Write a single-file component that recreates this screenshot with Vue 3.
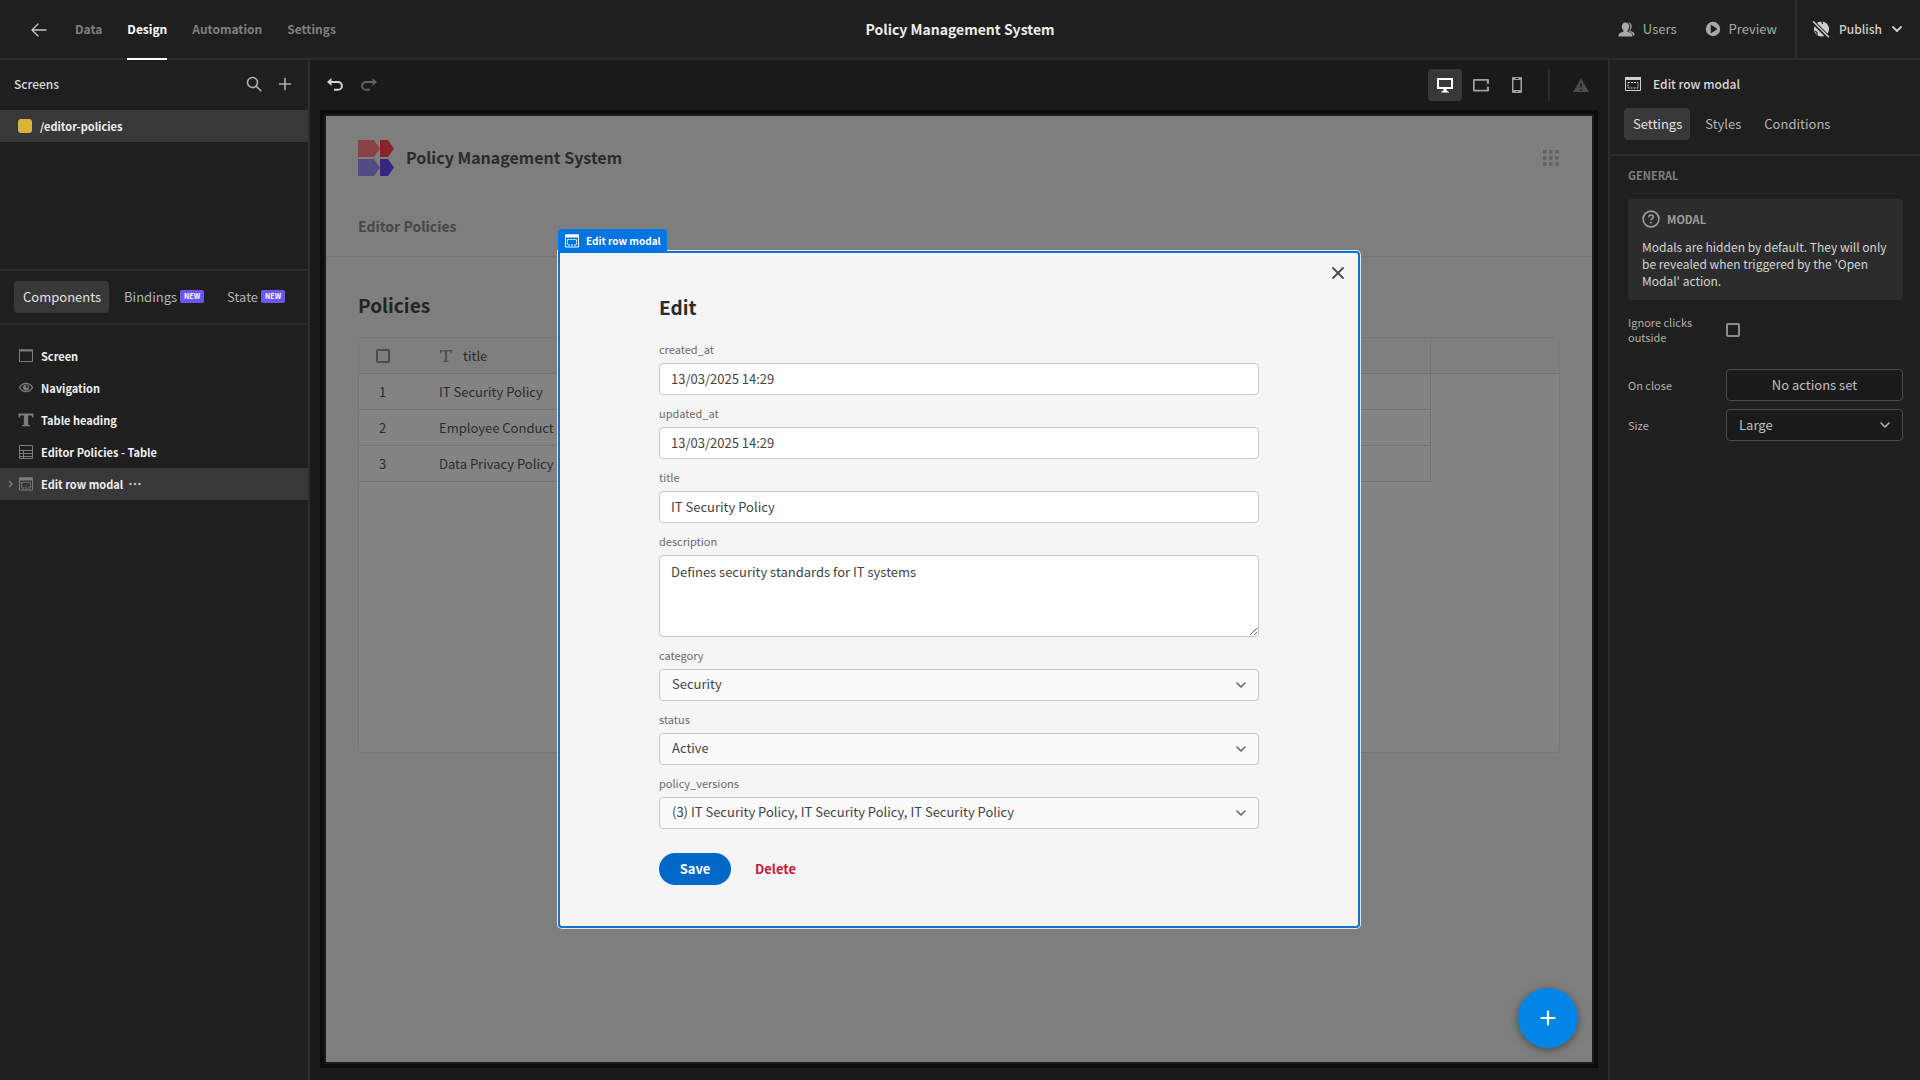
<script setup>
import { ref } from 'vue'

const navTabs = ['Data', 'Design', 'Automation', 'Settings']
const activeNav = ref('Design')
const treeTabs = [
  { name: 'Components', isNew: false },
  { name: 'Bindings', isNew: true },
  { name: 'State', isNew: true },
]
const activeTree = ref('Components')
const components = [
  { name: 'Screen', icon: 'screen' },
  { name: 'Navigation', icon: 'eye' },
  { name: 'Table heading', icon: 'text' },
  { name: 'Editor Policies - Table', icon: 'table' },
  { name: 'Edit row modal', icon: 'modal' },
]
const selected = ref('Edit row modal')
const panelTabs = ['Settings', 'Styles', 'Conditions']
const activePanel = ref('Settings')
const rows = ['IT Security Policy', 'Employee Conduct Policy', 'Data Privacy Policy']
const textFields = ref([
  { name: 'created_at', value: '13/03/2025 14:29' },
  { name: 'updated_at', value: '13/03/2025 14:29' },
  { name: 'title', value: 'IT Security Policy' },
])
const description = ref('Defines security standards for IT systems')
const selectFields = [
  { name: 'category', value: 'Security' },
  { name: 'status', value: 'Active' },
  { name: 'policy_versions', value: '(3) IT Security Policy, IT Security Policy, IT Security Policy' },
]
</script>

<template>
  <div class="builder">
    <header class="topbar">
      <nav class="nav">
        <button class="icon-btn back" aria-label="Back">
          <svg width="16" height="16" viewBox="0 0 16 16" fill="none" stroke="currentColor" stroke-width="1.4" stroke-linecap="round" stroke-linejoin="round"><path d="M15 8H1M7 2L1 8l6 6" /></svg>
        </button>
        <a v-for="t in navTabs" :key="t" href="#" class="nav-link" :class="{ active: t === activeNav }" @click.prevent="activeNav = t">{{ t }}</a>
      </nav>
      <h1 class="app-name">Policy Management System</h1>
      <div class="top-actions">
        <button class="top-btn">
          <svg width="17" height="17" viewBox="0 0 17 17" fill="currentColor"><path d="M7.500 1.500c2.500 0 3.700 1.800 3.700 4 0 1.700-.7 3.200-1.600 4.100v1.200c2.500.5 4.900 1.600 4.900 4v.700H.5v-.7c0-2.400 2.400-3.500 4.900-4V9.600C4.500 8.700 3.800 7.200 3.800 5.500c0-2.200 1.200-4 3.700-4z" /><path d="M10.300 1.500c2 0 3.300 1.700 3.300 3.800 0 1.500-.5 2.900-1.300 3.700v1.100c2.200.5 4.200 1.500 4.200 3.400v1h-1.300c-.3-2.200-2-3.400-4.300-4.100.8-1.200 1.300-3 1.300-4.900 0-1.700-.8-3-1.900-4z" /></svg>
          <span>Users</span>
        </button>
        <button class="top-btn">
          <svg width="16" height="16" viewBox="0 0 16 16" fill="currentColor" fill-rule="evenodd"><path d="M8 .8a7.200 7.200 0 1 0 0 14.400A7.200 7.200 0 0 0 8 .8zM5.800 4.200c0-.3.300-.5.600-.3l5.400 3.700c.3.200.3.600 0 .8l-5.400 3.700c-.3.200-.6 0-.6-.3z" /></svg>
          <span>Preview</span>
        </button>
        <button class="top-btn publish">
          <svg width="18" height="18" viewBox="0 0 18 18"><circle cx="9.500" cy="9" r="7.600" fill="currentColor" /><path d="M9.500 1l1.200 3M3 11l2 1.500v3" fill="none" stroke="#1f1f1f" stroke-width="1.200" /><path d="M0 .8l17.500 17.500" stroke="#1f1f1f" stroke-width="4" /><path d="M1.500 1.800L16.500 16.800" stroke="currentColor" stroke-width="1.500" stroke-linecap="round" /></svg>
          <span>Publish</span>
          <svg width="12" height="8" viewBox="0 0 12 8" fill="none" stroke="currentColor" stroke-width="1.800" stroke-linecap="round" stroke-linejoin="round"><path d="M2 2l4 4 4-4" /></svg>
        </button>
      </div>
    </header>

    <div class="body">
      <aside class="left">
        <section class="screens">
          <div class="screens-head">
            <h2 class="panel-title">Screens</h2>
            <button class="icon-btn muted" aria-label="Search screens">
              <svg width="16" height="16" viewBox="0 0 16 16" fill="none" stroke="currentColor" stroke-width="1.600" stroke-linecap="round"><circle cx="6.500" cy="6.500" r="5" /><path d="M10.300 10.300l4.500 4.500" /></svg>
            </button>
            <button class="icon-btn muted" aria-label="Add screen">
              <svg width="14" height="14" viewBox="0 0 14 14" fill="none" stroke="currentColor" stroke-width="1.600" stroke-linecap="round"><path d="M7 1.500v11M1.500 7h11" /></svg>
            </button>
          </div>
          <a href="#" class="screen-row" @click.prevent><span class="swatch"></span>/editor-policies</a>
        </section>

        <div class="tabs tree-tabs">
          <button v-for="t in treeTabs" :key="t.name" class="tab" :class="{ active: t.name === activeTree }" @click="activeTree = t.name">
            {{ t.name }}<span v-if="t.isNew" class="badge">NEW</span>
          </button>
        </div>

        <ul class="tree">
          <li v-for="c in components" :key="c.name" class="node" :class="{ selected: c.name === selected }" @click="selected = c.name">
            <span class="caret">
              <svg v-if="c.icon === 'modal'" width="5" height="8" viewBox="0 0 5 8" fill="none" stroke="currentColor" stroke-width="1.100"><path d="M1 1l3 3-3 3" /></svg>
            </span>
            <svg class="node-icon" width="16" height="16" viewBox="0 0 16 16" fill="none" stroke="currentColor" stroke-width="1">
              <template v-if="c.icon === 'screen'"><rect x="1.500" y="2" width="13" height="11.500" /><path d="M1 2.500h14" stroke-width="2" /></template>
              <template v-else-if="c.icon === 'eye'"><path d="M1.500 7.500C3 4.700 5.200 3.300 8 3.300s5 1.400 6.500 4.200c-1.500 2.800-3.700 4.200-6.500 4.200S3 10.300 1.500 7.500z" stroke-width="1.300" /><circle cx="8" cy="7.500" r="3" fill="currentColor" stroke="none" /><circle cx="8.800" cy="6.700" r="1.200" fill="#1f1f1f" stroke="none" /></template>
              <template v-else-if="c.icon === 'text'"><path d="M.5 1.500h15v4h-1.200l-.8-2h-3.300v9.300l1.800.5v1H4v-1l1.800-.5V3.500H2.500l-.8 2H.5z" fill="currentColor" stroke="none" /></template>
              <template v-else-if="c.icon === 'table'"><path d="M1.500 1.500h13v13h-13zM1.500 6.500h13M1.500 9.500h13M1.500 12.500h13M5.500 6.500v8" /></template>
              <template v-else><path d="M1.500 2h13v12h-13z" /><path d="M1 3h14" stroke-width="3" /><rect x="3.500" y="6.500" width="9" height="5.500" stroke-dasharray="2 1" /></template>
            </svg>
            <span>{{ c.name }}</span>
            <button v-if="c.name === selected" class="icon-btn more" aria-label="More actions">
              <svg width="12" height="4" viewBox="0 0 12 4" fill="currentColor"><circle cx="1.500" cy="2" r="1.300" /><circle cx="6" cy="2" r="1.300" /><circle cx="10.500" cy="2" r="1.300" /></svg>
            </button>
          </li>
        </ul>
      </aside>

      <main class="canvas">
        <div class="toolbar">
          <button class="icon-btn bright" aria-label="Undo">
            <svg width="18" height="16" viewBox="0 0 18 16" fill="none" stroke="currentColor" stroke-width="2"><path d="M4 5h8a3.900 3.900 0 0 1 0 7.800H8" /><path d="M5.500 1v8L1 5z" fill="currentColor" stroke="none" /></svg>
          </button>
          <button class="icon-btn dim" aria-label="Redo">
            <svg width="18" height="16" viewBox="0 0 18 16" fill="none" stroke="currentColor" stroke-width="2"><path d="M14 5H6a3.900 3.900 0 0 0 0 7.800h4" /><path d="M12.500 1v8L17 5z" fill="currentColor" stroke="none" /></svg>
          </button>
          <div class="devices">
            <button class="device active" aria-label="Desktop">
              <svg width="18" height="18" viewBox="0 0 18 18"><rect x="2" y="3" width="14" height="9" fill="none" stroke="currentColor" stroke-width="2" /><path d="M7.500 12h3v2.500l2.500 1.500v.5H5V16l2.500-1.500z" fill="currentColor" /></svg>
            </button>
            <button class="device" aria-label="Tablet">
              <svg width="18" height="18" viewBox="0 0 18 18"><path d="M2 3h14a1 1 0 0 1 1 1v10.500a1 1 0 0 1-1 1H2a1 1 0 0 1-1-1V4a1 1 0 0 1 1-1zm.7 1.700v9.100h12.100V4.700z" fill="currentColor" fill-rule="evenodd" /><path d="M16 7.800v3" stroke="#1a1a1a" stroke-width="2" /></svg>
            </button>
            <button class="device" aria-label="Mobile">
              <svg width="18" height="18" viewBox="0 0 18 18"><path d="M5 1h8a1 1 0 0 1 1 1v14a1 1 0 0 1-1 1H5a1 1 0 0 1-1-1V2a1 1 0 0 1 1-1zm.5 3v10h7V4z" fill="currentColor" fill-rule="evenodd" /><path d="M7.500 2.500h3M8.300 15.500h1.400" stroke="#1a1a1a" /></svg>
            </button>
          </div>
          <button class="icon-btn warn" aria-label="Issues">
            <svg width="18" height="16" viewBox="0 0 18 16"><path d="M9 1.500L17 15H1z" fill="currentColor" /><path d="M9 6v4.500M9 12v1.500" stroke="#1a1a1a" stroke-width="1.500" /></svg>
          </button>
        </div>

        <div class="frame">
          <div class="preview">
            <div class="site-head">
              <svg class="logo" width="36" height="36" viewBox="0 0 36 36"><path d="M0 0h16l6 8.500L16 17H0z" fill="#8b4245" /><path d="M22 0h8l6 8.500L30 17h-8z" fill="#8a2329" /><path d="M0 19h16l6 8.500L16 36H0z" fill="#544a86" /><path d="M22 19h8l6 8.500L30 36h-8z" fill="#382583" /></svg>
              <div class="site-name">Policy Management System</div>
              <svg class="grid-icon" width="16" height="16" viewBox="0 0 16 16" fill="#626262"><path d="M0 0h3.500v3.500H0zM6.200 0h3.500v3.500H6.200zM12.300 0h3.500v3.500h-3.500zM0 6.200h3.500v3.500H0zM6.200 6.200h3.500v3.500H6.200zM12.300 6.200h3.500v3.500h-3.500zM0 12.300h3.500v3.500H0zM6.200 12.300h3.500v3.500H6.200zM12.300 12.300h3.500v3.500h-3.500z" /></svg>
            </div>
            <div class="site-nav"><a href="#" @click.prevent>Editor Policies</a></div>
            <div class="site-body">
              <h2 class="section-title">Policies</h2>
              <div class="grid">
                <table class="data">
                  <colgroup><col class="c-sel" /><col /><col class="c-tail" /></colgroup>
                  <thead>
                    <tr>
                      <th class="sel"><input type="checkbox" class="check dark" aria-label="Select all rows" /></th>
                      <th>
                        <span class="th-title"><svg width="14" height="14" viewBox="0 0 14 14" fill="#525252"><path d="M1 1h12v3.200h-1l-.6-1.700H8v9l1.700.5v.9H4.300V12l1.700-.5v-9H2.600L2 4.200H1z" /></svg>title</span>
                      </th>
                      <th></th>
                    </tr>
                  </thead>
                  <tbody>
                    <tr v-for="(r, i) in rows" :key="r">
                      <td class="sel">{{ i + 1 }}</td>
                      <td>{{ r }}</td>
                      <td class="tail"></td>
                    </tr>
                  </tbody>
                </table>
              </div>
            </div>

            <div class="overlay">
              <form class="modal" role="dialog" aria-label="Edit" @submit.prevent>
                <div class="tag">
                  <svg width="16" height="16" viewBox="0 0 16 16" fill="none" stroke="currentColor"><path d="M1.500 2h13v12h-13z" /><path d="M1 3h14" stroke-width="3" /><rect x="3.500" y="6.500" width="9" height="5.500" stroke-dasharray="2 1" /></svg>
                  Edit row modal
                </div>
                <button type="button" class="icon-btn close" aria-label="Close">
                  <svg width="14" height="14" viewBox="0 0 14 14" fill="none" stroke="currentColor" stroke-width="1.800" stroke-linecap="round"><path d="M2 2l10 10M12 2L2 12" /></svg>
                </button>
                <h2 class="modal-title">Edit</h2>
                <div v-for="f in textFields" :key="f.name" class="field">
                  <label :for="f.name">{{ f.name }}</label>
                  <input :id="f.name" v-model="f.value" type="text" class="control" />
                </div>
                <div class="field">
                  <label for="description">description</label>
                  <textarea id="description" v-model="description" class="control area"></textarea>
                </div>
                <div v-for="f in selectFields" :key="f.name" class="field">
                  <label :for="f.name">{{ f.name }}</label>
                  <div class="select-wrap">
                    <select :id="f.name" class="control picker"><option>{{ f.value }}</option></select>
                    <svg class="chevron" width="12" height="8" viewBox="0 0 12 8" fill="none" stroke="currentColor" stroke-width="1.600" stroke-linecap="round" stroke-linejoin="round"><path d="M2 2l4 4 4-4" /></svg>
                  </div>
                </div>
                <div class="buttons">
                  <button type="submit" class="save">Save</button>
                  <button type="button" class="delete">Delete</button>
                </div>
              </form>
            </div>

            <button class="fab" aria-label="Add component">
              <svg width="16" height="16" viewBox="0 0 16 16" stroke="#fff" stroke-width="2.200" stroke-linecap="round"><path d="M8 1.500v13M1.500 8h13" /></svg>
            </button>
          </div>
        </div>
      </main>

      <aside class="right">
        <div class="right-head">
          <svg width="16" height="16" viewBox="0 0 16 16" fill="none" stroke="currentColor"><path d="M.5 1.500h15v13H.5z" /><path d="M0 2.500h16" stroke-width="3" /><rect x="3" y="6.500" width="10" height="5.500" stroke-dasharray="2 1" /></svg>
          <h2 class="panel-title">Edit row modal</h2>
        </div>
        <div class="tabs panel-tabs">
          <button v-for="t in panelTabs" :key="t" class="tab" :class="{ active: t === activePanel }" @click="activePanel = t">{{ t }}</button>
        </div>
        <div class="general">
          <h3 class="caption">GENERAL</h3>
          <div class="info">
            <div class="info-head">
              <svg width="18" height="18" viewBox="0 0 18 18" fill="none" stroke="currentColor" stroke-width="1.600"><circle cx="9" cy="9" r="7.900" /><path d="M6.800 7.200c0-1.500 1-2.200 2.200-2.200s2.200.8 2.200 2c0 1.600-2.200 1.700-2.200 3.500M9 12v1.600" /></svg>
              <span>MODAL</span>
            </div>
            <p>Modals are hidden by default. They will only be revealed when triggered by the 'Open Modal' action.</p>
          </div>
          <div class="props">
            <label for="ignore">Ignore clicks outside</label>
            <input id="ignore" type="checkbox" class="check" />
            <label for="onclose" class="gap-top">On close</label>
            <button id="onclose" class="prop-control gap-top">No actions set</button>
            <label for="size">Size</label>
            <div class="select-wrap">
              <select id="size" class="prop-control prop-select"><option>Large</option></select>
              <svg class="chevron" width="12" height="8" viewBox="0 0 12 8" fill="none" stroke="currentColor" stroke-width="1.600" stroke-linecap="round" stroke-linejoin="round"><path d="M2 2l4 4 4-4" /></svg>
            </div>
          </div>
        </div>
      </aside>
    </div>
  </div>
</template>

<style>
body {
  background: #1a1a1a;
}
</style>

<style scoped>
* {
  box-sizing: border-box;
}
.builder {
  display: flex;
  flex-direction: column;
  min-height: 100vh;
  background: #1f1f1f;
  color: #d0d0d0;
  font-family: "Noto Sans CJK SC", "Noto Sans", sans-serif;
  font-size: 13px;
  line-height: 16px;
}
button,
input,
select,
textarea {
  font: inherit;
  color: inherit;
  margin: 0;
}
button {
  background: none;
  border: 0;
  padding: 0;
  cursor: pointer;
}
a {
  color: inherit;
  text-decoration: none;
}
h1,
h2,
h3,
p,
ul {
  margin: 0;
  padding: 0;
}
svg {
  display: block;
  flex: none;
}
.icon-btn {
  display: flex;
  align-items: center;
  justify-content: center;
}
.muted {
  color: #b0b0b0;
}

/* Top bar */
.topbar {
  display: grid;
  grid-template-columns: 1fr auto 1fr;
  height: 60px;
  border-bottom: 2px solid #2c2c2c;
}
.nav {
  display: flex;
  gap: 25px;
  padding-left: 31px;
  margin-bottom: -2px;
}
.back {
  color: #c8c8c8;
  margin-right: 3px;
}
.nav-link {
  display: flex;
  align-items: center;
  padding-bottom: 1px;
  font-size: 12px;
  font-weight: 700;
  color: #7f7f7f;
  border-bottom: 2px solid transparent;
}
.nav-link.active {
  color: #fff;
  border-bottom-color: #fff;
}
.app-name {
  align-self: center;
  font-size: 14px;
  font-weight: 700;
  color: #ededed;
}
.top-actions {
  display: flex;
  justify-content: flex-end;
}
.top-btn {
  display: flex;
  align-items: center;
  gap: 8px;
  margin-right: 28px;
  color: #a8a8a8;
}
.top-btn + .top-btn {
  margin-right: 18px;
}
.top-actions .publish.publish {
  margin: 0;
  padding: 0 17px 0 15px;
  gap: 9px;
  border-left: 2px solid #2c2c2c;
  color: #cfcfcf;
  font-size: 12px;
  font-weight: 500;
}

/* Columns */
.body {
  display: flex;
  flex: 1;
}
.left {
  flex: none;
  width: 310px;
  border-right: 2px solid #2c2c2c;
}
.right {
  flex: none;
  width: 312px;
  border-left: 2px solid #2c2c2c;
}
.panel-title {
  font-size: 12px;
  font-weight: 500;
  color: #d8d8d8;
}
.screens {
  min-height: 211px;
  border-bottom: 2px solid #2c2c2c;
}
.screens-head {
  display: flex;
  align-items: center;
  gap: 16px;
  height: 50px;
  padding: 0 16px 3px 14px;
}
.screens-head .panel-title {
  flex: 1;
}
.screen-row {
  display: flex;
  align-items: center;
  gap: 8px;
  height: 32px;
  padding-left: 18px;
  background: #383838;
  color: #f0f0f0;
  font-size: 11px;
  font-weight: 700;
}
.swatch {
  width: 14px;
  height: 14px;
  border-radius: 3px;
  background: #d8b437;
}
.tabs {
  display: flex;
  border-bottom: 2px solid #2c2c2c;
}
.tree-tabs {
  padding: 10px 14px;
  gap: 6px;
}
.tab {
  display: flex;
  align-items: center;
  gap: 3px;
  height: 32px;
  padding: 0 8px 1px 9px;
  border-radius: 4px;
  color: #b4b4b4;
}
.tab.active {
  background: #383838;
  color: #e2e2e2;
}
.badge {
  padding: 0 4px;
  border-radius: 2px;
  background: #6a56f0;
  color: #fff;
  font-size: 7px;
  font-weight: 700;
  line-height: 13px;
}
.tree {
  list-style: none;
  padding-top: 15px;
}
.node {
  display: flex;
  align-items: center;
  height: 32px;
  padding: 0 0 1px 8px;
  color: #f0f0f0;
  font-size: 11px;
  font-weight: 700;
}
.node.selected {
  background: #383838;
}
.caret {
  width: 10px;
  color: #8a8a8a;
}
.node-icon {
  margin-right: 7px;
  color: #7c7c7c;
}
.more {
  margin-left: 6px;
  color: #b8b8b8;
}

/* Canvas */
.canvas {
  display: flex;
  flex-direction: column;
  flex: 1;
  min-width: 0;
  padding: 0 10px 12px;
  background: #1a1a1a;
}
.toolbar {
  display: flex;
  align-items: center;
  height: 50px;
  padding: 0 8px 0 6px;
  gap: 16px;
}
.bright {
  color: #d4d4d4;
}
.dim {
  color: #606060;
}
.warn {
  color: #4c4c4c;
}
.devices {
  display: flex;
  gap: 2px;
  margin-left: auto;
  margin-right: 6px;
  padding-right: 14px;
  border-right: 2px solid #2c2c2c;
}
.device {
  display: flex;
  align-items: center;
  justify-content: center;
  width: 34px;
  height: 32px;
  border-radius: 4px;
  color: #a0a0a0;
}
.device.active {
  background: #383838;
  color: #fff;
}
.frame {
  display: flex;
  flex: 1;
  padding: 2px;
  border: 4px solid #0c0c0c;
}
.preview {
  position: relative;
  flex: 1;
  min-width: 0;
  background: #7e7e7e;
  color: #333;
}
.site-head {
  display: flex;
  align-items: center;
  gap: 12px;
  padding: 24px 33px 0 32px;
}
.site-name {
  flex: 1;
  padding-bottom: 2px;
  font-size: 16px;
  font-weight: 700;
  line-height: 24px;
  color: #2b2b2b;
}
.site-nav {
  padding: 40px 32px 20px;
  border-bottom: 1px solid #747474;
  font-size: 14px;
  font-weight: 700;
  line-height: 20px;
  color: #474747;
}
.site-body {
  padding: 32px;
}
.section-title {
  font-size: 19px;
  font-weight: 700;
  line-height: 32px;
  color: #242424;
}
.grid {
  min-height: 416px;
  margin-top: 16px;
  border: 1px solid #777;
  border-radius: 4px;
  background: #838383;
  overflow: hidden;
}
.data {
  width: 100%;
  table-layout: fixed;
  border-collapse: separate;
  border-spacing: 0;
}
.c-sel {
  width: 70px;
}
.c-tail {
  width: 128px;
}
.data th,
.data td {
  height: 36px;
  padding: 0 10px;
  border-bottom: 1px solid #727272;
  font-weight: 400;
  text-align: left;
  color: #2c2c2c;
}
.data th {
  background: #7e7e7e;
}
.data .sel {
  padding-left: 17px;
}
td.sel {
  text-indent: 3px;
}
.data th:nth-child(2),
.data td:nth-child(2) {
  border-right: 1px solid #747474;
}
.data td.tail {
  border-bottom: 0;
}
.th-title {
  display: flex;
  align-items: center;
  gap: 10px;
}
.check {
  display: block;
  appearance: none;
  width: 14px;
  height: 14px;
  border: 2px solid #8c8c8c;
  border-radius: 2px;
}
.check.dark {
  border-color: #4c4c4c;
}

/* Modal */
.overlay {
  position: absolute;
  inset: 0;
  display: flex;
  align-items: center;
  justify-content: center;
}
.modal {
  position: relative;
  width: 802px;
  padding: 38px 99px 41px;
  border: 2px solid #1473c8;
  border-radius: 0 4px 4px 4px;
  box-shadow: 0 0 0 1px #d8eaf8;
  background: #f5f5f5;
}
.tag {
  position: absolute;
  left: -2px;
  bottom: 100%;
  display: flex;
  align-items: center;
  gap: 6px;
  height: 24px;
  padding: 0 6px;
  border-radius: 4px 4px 0 0;
  background: #0074e0;
  color: #fff;
  font-size: 10px;
  font-weight: 700;
}
.close {
  position: absolute;
  top: 13px;
  right: 13px;
  color: #4a4a4a;
}
.modal-title {
  margin-bottom: 16px;
  font-size: 19px;
  font-weight: 700;
  line-height: 32px;
  color: #2c2c2c;
}
.field {
  margin-bottom: 8px;
}
.field label {
  display: block;
  padding: 2px 0 6px;
  font-size: 11px;
  line-height: 16px;
  color: #6a6a6a;
}
.control {
  display: block;
  width: 100%;
  height: 32px;
  padding: 0 11px 1px;
  border: 1px solid #c6c6c6;
  border-radius: 4px;
  background: #fff;
  color: #444;
}
.area {
  height: 82px;
  padding-top: 8px;
}
.picker {
  appearance: none;
  padding-left: 12px;
  background: #fafafa;
}
.select-wrap {
  position: relative;
}
.chevron {
  position: absolute;
  top: 12px;
  right: 12px;
  color: #666;
  pointer-events: none;
}
.buttons {
  display: flex;
  align-items: center;
  gap: 24px;
  padding-top: 16px;
}
.save {
  width: 72px;
  height: 32px;
  border-radius: 16px;
  background: #0068c9;
  color: #fff;
  font-weight: 700;
}
.delete {
  color: #c9183a;
  font-weight: 700;
}
.fab {
  position: absolute;
  right: 14px;
  bottom: 14px;
  display: flex;
  align-items: center;
  justify-content: center;
  width: 60px;
  height: 60px;
  border-radius: 50%;
  background: #0385e6;
  box-shadow: 0 2px 8px rgba(0, 0, 0, 0.4);
}

/* Settings panel */
.right-head {
  display: flex;
  align-items: center;
  gap: 12px;
  height: 48px;
  padding-left: 15px;
}
.panel-tabs {
  gap: 6px;
  padding: 0 14px 14px;
}
.general {
  padding: 11px 17px 0 18px;
}
.caption {
  margin-bottom: 16px;
  font-size: 11px;
  font-weight: 700;
  color: #808080;
}
.info {
  padding: 11px 12px 11px 14px;
  border-radius: 4px;
  background: #2c2c2c;
}
.info-head {
  display: flex;
  align-items: center;
  gap: 7px;
  margin-bottom: 10px;
  color: #9e9e9e;
  font-size: 11px;
  font-weight: 700;
}
.info p {
  font-size: 12px;
  line-height: 17px;
  color: #d4d4d4;
}
.props {
  display: grid;
  grid-template-columns: 80px minmax(0, 1fr);
  column-gap: 18px;
  row-gap: 8px;
  align-items: center;
  margin-top: 15px;
}
.props label {
  font-size: 11px;
  line-height: 15px;
  color: #b0b0b0;
}
.props .gap-top {
  margin-top: 16px;
}
.prop-control {
  display: block;
  width: 100%;
  height: 32px;
  border: 1px solid #4a4a4a;
  border-radius: 4px;
  background: #1a1a1a;
  color: #c0c0c0;
}
.prop-select {
  appearance: none;
  padding: 0 12px;
}
.props .chevron {
  color: #b0b0b0;
}
</style>
